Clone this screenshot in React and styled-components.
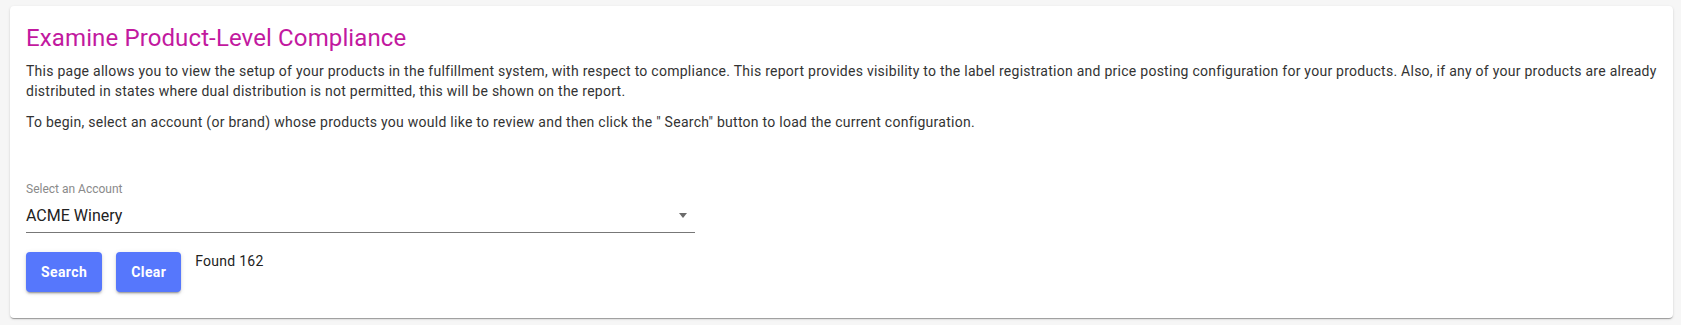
import React from "react";
import styled, { createGlobalStyle } from "styled-components";

const Global = createGlobalStyle`
  html, body { margin: 0; padding: 0; background: #f6f6f6; }
  body { font-family: Roboto, "Liberation Sans", Arial, sans-serif; }
`;

const Page = styled.div`
  padding: 6px 8px 7px 10px;
`;

const Card = styled.section`
  background: #fff;
  border-radius: 4px;
  box-shadow: 0 2px 1px -1px rgba(0,0,0,0.2), 0 1px 1px 0 rgba(0,0,0,0.14), 0 1px 3px 0 rgba(0,0,0,0.12);
  padding: 16px 16px 26px 16px;
`;

const Title = styled.h1`
  margin: 0 0 8px;
  font-size: 24px;
  line-height: 32px;
  font-weight: 400;
  letter-spacing: 0.12px;
  color: #c2199f;
`;

const Para = styled.p`
  margin: 0 0 ${p => p.$gap || 0}px;
  font-size: 14px;
  line-height: 19.5px;
  letter-spacing: 0.26px;
  color: #333;
`;

const Field = styled.div`
  margin-top: 49px;
  width: 669px;
`;

const Label = styled.label`
  display: block;
  font-size: 12px;
  line-height: 14px;
  color: #8a8a8a;
  margin-bottom: 8px;
`;

const SelectBox = styled.div`
  display: flex;
  align-items: center;
  justify-content: space-between;
  border-bottom: 1px solid #777;
  padding: 0 8px 4px 0;
  height: 24px;
  font-size: 16px;
  color: #222;
`;

const Actions = styled.div`
  display: flex;
  align-items: flex-start;
  gap: 14px;
  margin-top: 19px;
`;

const Button = styled.button`
  height: 40px;
  padding: 0 15px;
  border: none;
  border-radius: 4px;
  background: #5677fc;
  color: #fff;
  font-family: Roboto, "Liberation Sans", Arial, sans-serif;
  font-weight: 700;
  font-size: 14px;
  letter-spacing: 0.4px;
  box-shadow: 0 3px 1px -2px rgba(0,0,0,0.2), 0 2px 2px 0 rgba(0,0,0,0.14), 0 1px 5px 0 rgba(0,0,0,0.12);
  cursor: pointer;
`;

const Found = styled.span`
  font-size: 14px;
  line-height: 19px;
  letter-spacing: 0.25px;
  color: #222;
`;

const Caret = () => (
  <svg width="8" height="5" viewBox="0 0 8 5">
    <path d="M0 0h8L4 5z" fill="#6b6b6b" />
  </svg>
);

export default function App() {
  return (
    <>
      <Global />
      <Page>
        <Card>
          <Title>Examine Product-Level Compliance</Title>
          <Para $gap={12}>
            This page allows you to view the setup of your products in the fulfillment system, with respect to compliance. This report provides visibility to the label registration and price posting configuration for your products. Also, if any of your products are already distributed in states where dual distribution is not permitted, this will be shown on the report.
          </Para>
          <Para>
            To begin, select an account (or brand) whose products you would like to review and then click the " Search" button to load the current configuration.
          </Para>
          <Field>
            <Label>Select an Account</Label>
            <SelectBox>
              <span>ACME Winery</span>
              <Caret />
            </SelectBox>
          </Field>
          <Actions>
            <Button>Search</Button>
            <Button>Clear</Button>
            <Found>Found 162</Found>
          </Actions>
        </Card>
      </Page>
    </>
  );
}
